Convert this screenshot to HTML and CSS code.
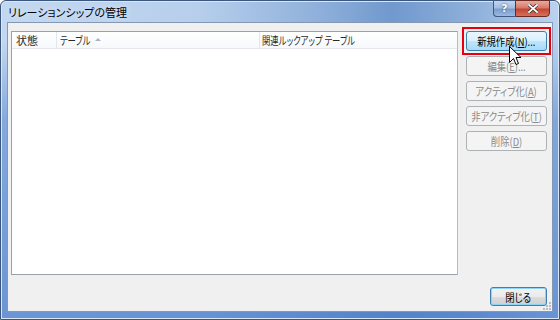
FILE: index.html
```html
<!DOCTYPE html>
<html lang="ja">
<head>
    <meta charset="utf-8">
    <title>リレーションシップの管理</title>
    <link rel="stylesheet" href="styles.css">
</head>
<body>
    <div class="window">
        <!-- Title bar -->
        <div class="titlebar">
            <span class="title">リレーションシップの管理</span>
            <div class="caption-buttons">
                <span class="cap cap-help">?</span>
                <span class="cap cap-close">
                    <svg width="10" height="9" viewBox="0 0 10 9">
                        <path d="M1 1 L9 8 M9 1 L1 8" stroke="#3a2a2a" stroke-width="3.2" stroke-linecap="square"/>
                        <path d="M1 1 L9 8 M9 1 L1 8" stroke="#ffffff" stroke-width="1.8" stroke-linecap="square"/>
                    </svg>
                </span>
            </div>
        </div>

        <div class="client">
            <div class="main">
                <!-- Relationship list -->
                <div class="list">
                    <div class="list-header">
                        <div class="col col-state">状態</div>
                        <div class="col col-table"><span class="squeeze">テーブル</span><span class="sort"></span></div>
                        <div class="col col-lookup"><span class="squeeze">関連ルックアップ テーブル</span></div>
                    </div>
                </div>

                <!-- Action buttons -->
                <div class="actions">
                    <div class="highlight">
                        <button class="btn hot"><span class="label">新規作成(<u>N</u>)...</span></button>
                    </div>
                    <button class="btn" disabled><span class="label">編集(<u>E</u>)...</span></button>
                    <button class="btn" disabled><span class="label">アクティブ化(<u>A</u>)</span></button>
                    <button class="btn" disabled><span class="label">非アクティブ化(<u>T</u>)</span></button>
                    <button class="btn" disabled><span class="label">削除(<u>D</u>)</span></button>
                </div>
            </div>

            <div class="footer">
                <button class="btn default"><span class="label">閉じる</span></button>
            </div>

            <svg class="grip" width="8" height="8" viewBox="0 0 8 8">
                <rect x="6" y="0" width="2" height="2" fill="#b8bcc4"/>
                <rect x="3" y="3" width="2" height="2" fill="#b8bcc4"/>
                <rect x="6" y="3" width="2" height="2" fill="#b8bcc4"/>
                <rect x="0" y="6" width="2" height="2" fill="#b8bcc4"/>
                <rect x="3" y="6" width="2" height="2" fill="#b8bcc4"/>
                <rect x="6" y="6" width="2" height="2" fill="#b8bcc4"/>
            </svg>
        </div>

        <!-- Mouse pointer -->
        <svg class="cursor" width="13" height="20" viewBox="0 0 13 20">
            <path d="M0.5 0.5 L0.5 16.5 L4.5 12.5 L7 18.5 L9.5 17.5 L7 11.5 L12 11.5 Z" fill="#ffffff" stroke="#000000" stroke-width="1"/>
        </svg>
    </div>
</body>
</html>
```

FILE: styles.css
```css
/* Windows 7 style dialog */
body {
    margin: 0;
    background-color: #ffffff;
    font-family: "Noto Sans CJK JP", "Noto Sans", sans-serif;
    font-size: 11px;
    font-feature-settings: "palt";
}

.window {
    position: relative;
    box-sizing: border-box;
    width: 560px;
    height: 320px;
    display: flex;
    flex-direction: column;
    padding: 0 6px 7px 6px;
    border: 1px solid #3b577d;
    border-radius: 6px 6px 0 0;
    background:
        linear-gradient(to bottom, rgba(80, 130, 205, 0) 40px, rgba(80, 130, 205, 0.55) 120px, rgba(70, 120, 200, 0.7) 100%),
        linear-gradient(to right, #c3d8f0 0%, #b7cfec 35%, #93b3dc 55%, #7199ce 70%, #8fb0da 85%, #bcd3ee 100%);
    box-shadow: inset 0 0 0 1px #d9e6f6;
}

.titlebar {
    height: 21px;
    display: flex;
    align-items: flex-start;
}

.title {
    margin: 3px 0 0 1px;
    line-height: 16px;
    color: #000000;
    text-shadow: 0 0 6px #e8f1fb;
}

.caption-buttons {
    display: flex;
    margin: -1px 3px 0 auto;
}

.cap {
    display: flex;
    align-items: center;
    justify-content: center;
    height: 17px;
    box-sizing: border-box;
    border: 1px solid #3e5a82;
    color: #ffffff;
    font-family: "DejaVu Sans", sans-serif;
    font-weight: bold;
    font-size: 11px;
}

.cap-help {
    width: 22px;
    border-right: none;
    border-radius: 0 0 0 4px;
    background: linear-gradient(#c3d6ee 0%, #a3bde0 45%, #7c9dcb 55%, #9cb9e0 100%);
    text-shadow: 0 0 2px #1f3656;
}

.cap-close {
    width: 35px;
    border-color: #6b2a22;
    border-radius: 0 0 4px 0;
    background: linear-gradient(#e8aaa0 0%, #d7796c 45%, #c34633 55%, #d5705c 100%);
}

.client {
    position: relative;
    flex: 1;
    display: flex;
    flex-direction: column;
    padding: 8px 5px 5px 3px;
    background-color: #f0f0f0;
    border: 1px solid #8497b3;
}

.main {
    display: flex;
    gap: 8px;
}

.list {
    box-sizing: border-box;
    width: 447px;
    height: 244px;
    background-color: #ffffff;
    border: 1px solid #9aa1ab;
    border-right-color: #b7bcc4;
}

.list-header {
    display: flex;
    height: 16px;
    border-bottom: 1px solid #e3e6ea;
    background: linear-gradient(#ffffff, #f7f8fa);
    color: #2a2a2a;
    line-height: 16px;
}

.col {
    box-sizing: border-box;
    border-right: 1px solid #e3e6ea;
    white-space: nowrap;
}

/* narrow kana like Meiryo UI */
.squeeze {
    display: inline-block;
    transform: scaleX(0.76);
    transform-origin: left center;
}

.col-state {
    width: 45px;
    padding-left: 4px;
}

.col-table {
    width: 203px;
    padding-left: 3px;
    display: flex;
    align-items: center;
}

.col-table .squeeze {
    margin-right: -10px;
}

.col-lookup {
    padding-left: 2px;
    border-right: none;
}

.sort {
    width: 0;
    height: 0;
    margin: 0 0 2px 5px;
    border-left: 3px solid transparent;
    border-right: 3px solid transparent;
    border-bottom: 3px solid #aab3c0;
}

.actions {
    display: flex;
    flex-direction: column;
    gap: 5px;
}

.highlight {
    outline: 2px solid #e60012;
    outline-offset: 2px;
}

.btn {
    display: flex;
    align-items: center;
    justify-content: center;
    box-sizing: border-box;
    width: 81px;
    height: 20px;
    padding: 0;
    border: 1px solid #707070;
    border-radius: 3px;
    background: linear-gradient(#f2f2f2 0%, #ebebeb 50%, #dddddd 51%, #cfcfcf 100%);
    font-family: inherit;
    font-size: 11px;
    font-feature-settings: "palt";
    line-height: 16px;
    color: #000000;
    white-space: nowrap;
}

.label {
    display: inline-block;
    flex-shrink: 0;
    transform: scaleX(0.85);
}

.btn.hot {
    border-color: #3c7fb1;
    background: linear-gradient(#eaf6fd 0%, #d9f0fc 50%, #bee6fd 51%, #a7d9f5 100%);
}

.btn:disabled {
    border-color: #adb2b5;
    background: #f4f4f4;
    color: #8a8a8a;
}

.footer {
    display: flex;
    justify-content: flex-end;
    margin-top: 12px;
}

.btn.default {
    width: 57px;
    height: 19px;
    border-color: #3c7fb1;
    box-shadow: inset 0 0 0 1px #8fd4f6;
}

.grip {
    position: absolute;
    right: 1px;
    bottom: 1px;
}

.cursor {
    position: absolute;
    left: 508px;
    top: 45px;
}
```
